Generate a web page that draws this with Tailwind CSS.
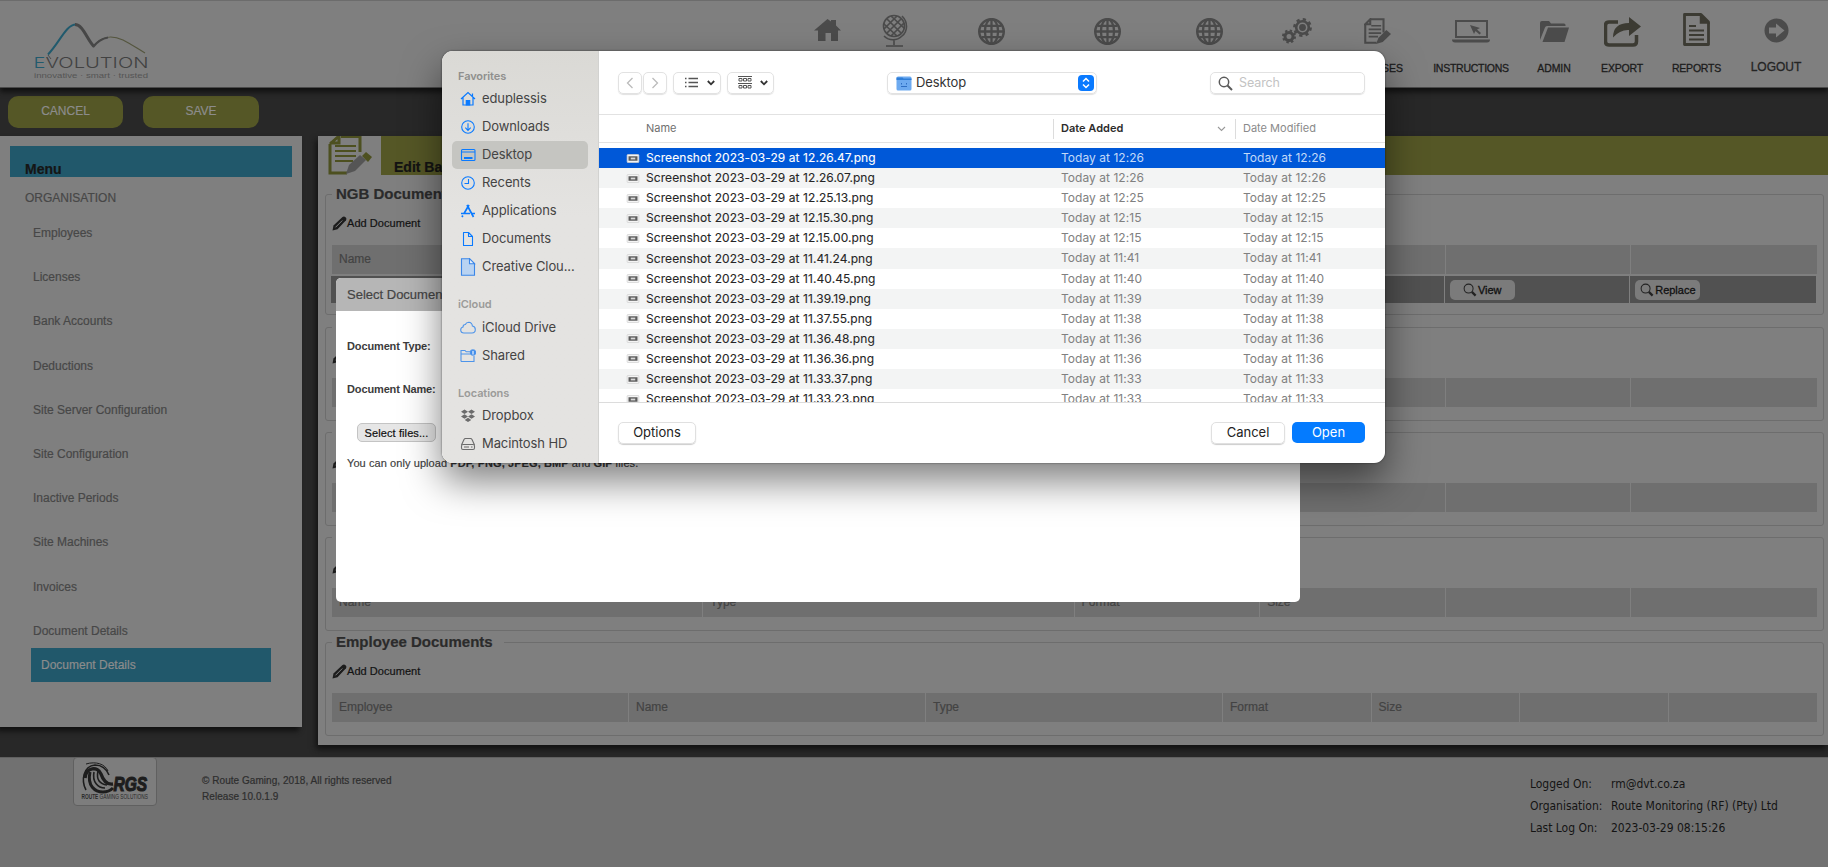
<!DOCTYPE html>
<html lang="en">
<head>
  <meta charset="UTF-8" />
  <meta name="viewport" content="width=device-width, initial-scale=1.0"/>
  <title>Evolution - Document Details</title>
  <script src="https://cdn.jsdelivr.net/npm/@tailwindcss/browser@4"></script>
</head>
<body class="bg-[#282828] font-['Liberation_Sans',Arial,sans-serif]">
  <!-- Shared icons -->
  <svg class="hidden">
    <symbol id="globe" viewBox="0 0 26 26">
      <circle cx="13" cy="13" r="11.800" fill="none" stroke="currentColor" stroke-width="2.400"/>
      <ellipse cx="13" cy="13" rx="6.300" ry="12" fill="none" stroke="currentColor" stroke-width="2.200"/>
      <path d="M13 1v24M1 13h24M3.500 7.500h19M3.500 18.500h19" fill="none" stroke="currentColor" stroke-width="2.200"/>
    </symbol>
    <symbol id="docpen" viewBox="0 0 26 26">
      <path d="M6 1.200H18.800V14M1.200 6V23.800H12M1.200 6L6 1.200V6z" fill="none" stroke="currentColor" stroke-width="2"/>
      <path d="M7 7.500h9.500M4.500 11h12M4.500 14.500h12M4.500 18h9" stroke="currentColor" stroke-width="1.600"/>
    </symbol>
    <symbol id="pencil" viewBox="0 0 15 15">
      <path d="M.5 14.500l1-5L10.500 1q1.500-1.200 3 .200t.500 3L5.500 13.300z" fill="currentColor"/>
      <path d="M3.500 11.300L10.300 4.500" stroke="#7f7f7f" stroke-width="1"/>
    </symbol>
    <symbol id="lens" viewBox="0 0 15 15">
      <circle cx="6" cy="6" r="4.800" fill="none" stroke="currentColor" stroke-width="1.100"/>
      <path d="M9.500 9.500l4 4" stroke="currentColor" stroke-width="2.400"/>
    </symbol>
    <symbol id="thumb" viewBox="0 0 14 10">
      <rect x=".5" y=".5" width="13" height="9" rx="1" fill="#f4f4f4" stroke="#cfcfcf" stroke-width=".8"/>
      <rect x="2" y="2.500" width="10" height="5" fill="#5c5c5c"/>
      <rect x="4.500" y="4" width="5" height="2" fill="#d8d8d8"/>
    </symbol>
  </svg>

  <div class="relative w-[1828px] h-[867px] overflow-hidden flex flex-col">
    <!-- Header -->
    <header class="relative z-10 h-[88px] shrink-0 bg-[#7f7f7f] border-t border-[#6c6c6c] border-b border-b-[#4a4a4a] flex justify-between shadow-[0_4px_5px_#111]">
      <svg class="ml-[30px] mt-[18px]" width="126" height="64" viewBox="30 19 126 64" fill="none">
        <path d="M48 54.500C60 42 66 24.500 76 24.500" stroke="#215a6d" stroke-width="2"/>
        <path d="M75 24.500c8 0 12 15 19 22" stroke="#474747" stroke-width="3"/>
        <path d="M93 47c9-12 19-12 30-7c8 4 15 9 22 13" stroke="#55563f" stroke-width="1.200"/>
        <path d="M93 47c4-5 9-8.500 15-9.500" stroke="#474747" stroke-width="2.200"/>
        <path d="M48 55l3 4" stroke="#4a4a4a"/>
        <text x="33.500" y="67.800" font-size="15" font-family="Inter" font-weight="300" textLength="115" lengthAdjust="spacingAndGlyphs" fill="#424242"><tspan fill="#215a6d">E</tspan>VOLUTION</text>
        <text x="34" y="78" font-size="7.500" textLength="114" lengthAdjust="spacingAndGlyphs" fill="#555">innovative · smart · trusted</text>
      </svg>
      <nav class="flex mr-[7px] text-[#4b4b4b] text-[10.5px] [-webkit-text-stroke:.3px]">
        <a class="w-[68px] flex justify-center pt-[18px]"><svg width="27" height="22" viewBox="0 0 27 22" fill="currentColor"><path d="M13.500 0L17 2.500V1h5v5.500l5 5h-3V22h-7v-8h-5.500v8H4V11.500H0z"/></svg></a>
        <a class="w-[68px] flex justify-center pt-[13px]">
          <svg width="26" height="34" viewBox="0 0 26 34" fill="none" stroke="currentColor" stroke-width="1.600">
            <circle cx="12" cy="12" r="10.500"/><path d="M20 2c6 6 6 15 0 20-5 5-13 5-18 0M12 26v5M4 32h17" />
            <path d="M5 5l14 14M2 10l13 12M9 2l13 12M19 5L5 19M15 2L2 15M22 9L9 22" stroke-width="1.700"/>
          </svg>
        </a>
        <a class="w-[124px] flex justify-center pt-[17px]"><svg width="27" height="27"><use href="#globe"/></svg></a>
        <a class="w-[108px] flex justify-center pt-[17px]"><svg width="27" height="27"><use href="#globe"/></svg></a>
        <a class="w-[97px] flex justify-center pt-[17px]"><svg width="27" height="27"><use href="#globe"/></svg></a>
        <a class="w-[78px] flex justify-center pt-[17px]">
          <svg width="31" height="27" viewBox="0 0 31 27" fill="none" stroke="currentColor">
            <circle cx="20.500" cy="9.500" r="6.300" stroke-width="2.600"/><circle cx="20.500" cy="9.500" r="8.200" stroke-width="2.400" stroke-dasharray="3.220 3.220"/><circle cx="20.500" cy="9.500" r="3.400" fill="currentColor" stroke="none"/>
            <circle cx="7" cy="18.500" r="4" stroke-width="3"/><circle cx="7" cy="18.500" r="6" stroke-width="2" stroke-dasharray="2.356 2.356"/>
          </svg>
        </a>
        <a class="w-[82px] flex flex-col items-center pt-[17px]">
          <svg width="27" height="27" viewBox="0 0 26 26"><use href="#docpen"/><path d="M11.500 25l2.500-6 7.500-7.500 4.500 4-8 7.500z" fill="currentColor"/></svg>
          <span class="mt-[16px] leading-[14px] text-[#1c1c1c]">LICENSES</span>
        </a>
        <a class="w-[106px] flex flex-col items-center pt-[19px]">
          <svg width="38" height="23" viewBox="0 0 38 23" fill="currentColor"><path d="M3 0h33v18H3zM5 2v14h29V2z" fill-rule="evenodd"/><path d="M0 19.500h38q0 3-3 3H3q-3 0-3-3zM18 5l10 3-3 1.500 4 3.500-1.500 1.500-4-3.500-1.500 3z"/></svg>
          <span class="mt-[18px] leading-[14px] text-[#1c1c1c] tracking-[-.25px]">INSTRUCTIONS</span>
        </a>
        <a class="w-[60px] flex flex-col items-center pt-[20px]">
          <svg width="29" height="21" viewBox="0 0 29 21" fill="currentColor"><path d="M0 19V2q0-2 2-2h7l2 2.500h13q1.500 0 1.500 1.500v1H7Q5.500 5 5 6.500z"/><path d="M8 6.500h21L24.500 21H2.500z"/></svg>
          <span class="mt-[19px] leading-[14px] text-[#1c1c1c] tracking-[-.1px]">ADMIN</span>
        </a>
        <a class="w-[76px] flex flex-col items-center pt-[16px]">
          <svg width="37" height="30" viewBox="0 0 37 30" fill="#3c3b33"><path d="M14 5H5Q1.500 5 1.500 8.500v16Q1.500 28 5 28h24q3.500 0 3.500-3.500V18" fill="none" stroke="#3c3b33" stroke-width="3.500"/><path d="M9 20.500Q9 6 25 6V0l12 9.500L25 19v-6q-9-.5-16 7.500z"/></svg>
          <span class="mt-[14px] leading-[14px] text-[#1c1c1c] tracking-[-.2px]">EXPORT</span>
        </a>
        <a class="w-[73px] flex flex-col items-center pt-[12px]">
          <svg width="27" height="33" viewBox="0 0 27 33" fill="none" stroke="#3c3b33" stroke-width="2.800"><path d="M1.500 1.500H18L25.500 9v22.500h-24z" stroke-linejoin="round"/><path d="M17.500 1.500v8.500h8z" fill="#3c3b33" stroke-width="1.500"/><path d="M6 13h7M6 17.500h15M6 22h15M6 26.500h15" stroke-width="2.200"/></svg>
          <span class="mt-[15px] leading-[14px] text-[#1c1c1c] tracking-[-.2px]">REPORTS</span>
        </a>
        <a class="w-[86px] mr-[2px] flex flex-col items-center pt-[17px]">
          <svg width="25" height="25" viewBox="0 0 25 25"><circle cx="12.500" cy="12.500" r="12" fill="currentColor"/><path d="M5 9.500h7V5.500l8.500 7-8.500 7v-4H5z" fill="#7f7f7f"/></svg>
          <span class="mt-[16px] leading-[16px] text-[12px] text-[#242424]">LOGOUT</span>
        </a>
      </nav>
    </header>

    <!-- Action buttons -->
    <div class="flex gap-5 pl-2 pt-2 h-[47px] shrink-0 text-[12px] text-[#8c8c8c] leading-[30px] [-webkit-text-stroke:.2px]">
      <button class="w-[115px] h-8 pb-[2px] rounded-[10px] bg-[#555726]">CANCEL</button>
      <button class="w-[116px] h-8 pb-[2px] rounded-[10px] bg-[#555726]">SAVE</button>
    </div>

    <div class="flex items-start justify-between h-[622px] shrink-0 pt-px [-webkit-text-stroke:.2px]">
      <!-- Side menu -->
      <aside class="w-[302px] h-[591px] bg-[#7f7f7f] shadow-[-3px_4px_5px_#111] text-[12px] text-[#474747]">
        <div class="h-[10px]"></div>
        <div class="ml-[10px] w-[282px] h-[31px] bg-[#21586b] text-[#151515] font-bold text-[14px] leading-[46px] pl-[15px]">Menu</div>
        <div class="ml-[25px] mt-[13px] leading-[16px] mb-[7px]">ORGANISATION</div>
        <ul id="menu" class="pl-[33px]"></ul>
        <div class="ml-[31px] w-[240px] h-[34px] bg-[#21586b] text-[#8c8c8c] leading-[34px] pl-[10px]">Document Details</div>
      </aside>

      <!-- Content -->
      <main class="w-[1510px] h-[609px] bg-[#7f7f7f] shadow-[-2px_4px_6px_#111]">
        <div class="flex h-[40px]">
          <svg class="ml-[10px]" width="45" height="39" viewBox="0 1 45 39" fill="none">
            <path d="M13 1.500H32V17M2 9V38H19M2 9L11 1V8H2" stroke="#4d5020" stroke-width="3"/>
            <path d="M7 11h21M7 16h21M7 21h21M7 26h18" stroke="#4d5020" stroke-width="2.200"/>
            <path d="M18 39l3-9 11-10 6 5-11 11z" fill="#555"/><path d="M34 21l4-4 6 5-4 5z" fill="#4d5020"/>
          </svg>
          <div class="ml-[8px] flex-1 bg-[#555726] text-[#131313] font-bold text-[14px] leading-[63px] pl-[13px] h-[39px]">Edit Bank Account</div>
        </div>
        <div id="sections" class="pl-[7px] pr-[4px] pt-[8px]"></div>
      </main>
    </div>

    <!-- Footer -->
    <footer class="flex-1 bg-[#717171] border-t border-[#606060] flex">
      <div class="ml-[73px] -mt-px w-[84px] h-[49px] bg-[#7d7d7d] border border-[#606060] rounded-[4px] shrink-0">
        <svg width="82" height="47" viewBox="74 757 82 47" fill="none" stroke="#1d1d1d">
          <path d="M86 789c-5-9-3-24 9-25 8 0 12 5 14 10" stroke-width="1.600"/>
          <path d="M86 763c10-3 19 0 22 7" stroke-width="1"/>
          <path d="M85 777c1-11 13-12 16-4 2 6 5 11 12 10" stroke-width="3.400"/>
          <path d="M90 771c-3 14 5 20 13 20 5 0 8-2 10-4" stroke-width="3"/>
          <path d="M94 771c-2 10 4 16 11 16M98 770c-2 9 2 13 9 14" stroke-width="1.600"/>
          <text x="113.500" y="789.800" font-size="20" font-weight="bold" font-style="italic" textLength="33.500" lengthAdjust="spacingAndGlyphs" fill="#1d1d1d" stroke="#1d1d1d" stroke-width="1.200">RGS</text>
          <text x="81.500" y="798" font-size="6.300" textLength="66.500" lengthAdjust="spacingAndGlyphs" fill="#2a2a2a" stroke="none"><tspan font-weight="bold">ROUTE</tspan> GAMING SOLUTIONS</text>
        </svg>
      </div>
      <div class="ml-[45px] mt-[15px] text-[10px] leading-[16px] text-[#2e2e2e] tracking-[.05px] [-webkit-text-stroke:.2px]">
        <p>© Route Gaming, 2018, All rights reserved</p>
        <p>Release 10.0.1.9</p>
      </div>
      <div class="ml-auto mr-[46px] mt-[15px] w-[252px] grid grid-cols-[81px_1fr] content-start text-[12px] leading-[22px] text-[#141414] font-['DejaVu_Sans_Condensed','DejaVu_Sans',sans-serif] tracking-[-.02px] whitespace-nowrap">
        <span>Logged On:</span><span>rm@dvt.co.za</span>
        <span>Organisation:</span><span>Route Monitoring (RF) (Pty) Ltd</span>
        <span>Last Log On:</span><span>2023-03-29 08:15:26</span>
      </div>
    </footer>

    <!-- Upload modal -->
    <div class="absolute z-20 left-[336px] top-[278px] w-[964px] h-[324px] bg-white rounded-[5px] overflow-hidden text-[11px] text-[#3c3c3c]">
      <div class="h-[33px] bg-[#b6b6b6] leading-[34px] pl-[11px] text-[13px] text-[#444] [-webkit-text-stroke:.2px]">Select Document</div>
      <div class="pl-[11px] pt-[27px] leading-[16px]">
        <p class="font-bold tracking-[-.13px]">Document Type:</p>
        <p class="font-bold tracking-[-.13px] mt-[27px]">Document Name:</p>
        <button class="block ml-[10px] mt-[26px] w-[79px] h-[19px] rounded-[5px] border border-[#c4c4c4] bg-[#e6e6e6] text-[#111] leading-[16px] tracking-[.1px] [-webkit-text-stroke:.2px]">Select files...</button>
        <p class="mt-[13px] tracking-[.08px] [-webkit-text-stroke:.15px]">You can only upload <b>PDF, PNG, JPEG, BMP</b> and <b>GIF</b> files.</p>
      </div>
    </div>

    <!-- File picker -->
    <div class="absolute z-30 left-[442px] top-[51px] w-[943px] h-[412px] rounded-[11px] shadow-[0_18px_38px_rgba(0,0,0,.5),0_0_2px_rgba(0,0,0,.6)] font-['Inter',sans-serif]">
      <div class="flex size-full rounded-[11px] overflow-hidden bg-white">
        <div class="w-[157px] shrink-0 border-r border-[#d2d2d0] bg-linear-to-b from-[#dad9d5] to-[#e4e3e1] to-40% text-[13px] tracking-[-.1px] text-[#444] pt-[16px]">
          <div class="pl-4 h-[18px] leading-[18px] text-[11px] font-semibold text-[#8f8f8d]">Favorites</div>
          <div class="flex items-center h-[28px] pl-[18px] gap-[6px]">
            <svg width="16" height="16" viewBox="0 0 16 16" fill="none" stroke="#0a7aff" stroke-width="1.200"><path d="M1 8l7-6.500L15 8M3 6.500V14h10V6.500M12.500 5V2.500"/><path d="M6.300 14V9.500h3.400V14z" fill="#0a7aff"/></svg>
            <span>eduplessis</span>
          </div>
          <div class="flex items-center h-[28px] pl-[18px] gap-[6px]">
            <svg width="16" height="16" viewBox="0 0 16 16" fill="none" stroke="#0a7aff" stroke-width="1.100"><circle cx="8" cy="8" r="6.300"/><path d="M8 4.300v7M5.300 8.700L8 11.400l2.700-2.700"/></svg>
            <span>Downloads</span>
          </div>
          <div class="flex items-center h-[28px] ml-[10px] w-[136px] rounded-[5px] bg-[#c5c5c1] pl-[8px] gap-[6px]">
            <svg width="16" height="16" viewBox="0 0 16 16" fill="none" stroke="#0a7aff" stroke-width="1.100"><rect x="1.500" y="2.500" width="13.500" height="11" rx="1"/><path d="M1.500 5h13.500"/><path d="M4 11h8.500" stroke-width="2"/></svg>
            <span>Desktop</span>
          </div>
          <div class="flex items-center h-[28px] pl-[18px] gap-[6px]">
            <svg width="16" height="16" viewBox="0 0 16 16" fill="none" stroke="#0a7aff" stroke-width="1.100"><circle cx="8" cy="8" r="6.300"/><path d="M8.500 4v4.500H4.500"/></svg>
            <span>Recents</span>
          </div>
          <div class="flex items-center h-[28px] pl-[18px] gap-[6px]">
            <svg width="16" height="16" viewBox="0 0 16 16" fill="none" stroke="#0a7aff" stroke-width="1.700"><path d="M9 2L4 10.500M7 2l6.500 12M1 10.500h9M12 10.500h3M2.800 12.500L2 14"/></svg>
            <span>Applications</span>
          </div>
          <div class="flex items-center h-[28px] pl-[18px] gap-[6px]">
            <svg width="16" height="16" viewBox="0 0 16 16" fill="none" stroke="#0a7aff" stroke-width="1.100"><path d="M3.500 1.500h5l4 4v9h-9zM8.500 1.500v4h4" stroke-linejoin="round"/></svg>
            <span>Documents</span>
          </div>
          <div class="flex items-center h-[28px] pl-[18px] gap-[6px]">
            <svg width="16" height="18" viewBox="0 0 16 18" fill="#b9d3f2" stroke="#3b86e8" stroke-width="1.100"><path d="M1.500 .7h8l5 5v11.600h-13z"/><path d="M9.500 .7v5h5z" fill="#e8f1fb"/></svg>
            <span>Creative Clou...</span>
          </div>
          <div class="pl-4 mt-[15px] h-[18px] leading-[17px] text-[11px] font-semibold text-[#9b9b99]">iCloud</div>
          <div class="flex items-center h-[28px] pl-[18px] gap-[6px]">
            <svg width="16" height="14" viewBox="0 0 16 14" fill="none" stroke="#4d94ea" stroke-width="1.100"><path d="M4 12q-3.200 0-3.300-3Q.7 6.500 3 6q0-2.500 2.300-2.500Q6.300 1.300 8.800 1.300q3.200.2 3.600 3.700 3 .5 2.900 3.700Q15.200 12 12 12z"/></svg>
            <span>iCloud Drive</span>
          </div>
          <div class="flex items-center h-[28px] pl-[18px] gap-[6px]">
            <svg width="16" height="14" viewBox="0 0 16 14" fill="none" stroke="#4d94ea" stroke-width="1.100"><path d="M1 12.500V1.500h4l1.200 1.300h4M1 5h9.500M14 7v5.500H1"/><circle cx="13" cy="3.500" r="2.600" fill="#3f8beb"/><path d="M13 2v3.500" stroke="#fff"/></svg>
            <span>Shared</span>
          </div>
          <div class="pl-4 mt-[15px] h-[17px] leading-[17px] text-[11px] font-semibold text-[#9b9b99]">Locations</div>
          <div class="flex items-center h-[28px] pl-[18px] gap-[6px]">
            <svg width="16" height="14" viewBox="0 0 16 14" fill="#6c6c6c"><path d="M4.500 .5L8 2.700 4.500 5 1 2.700zM11.500 .5L15 2.700 11.500 5 8 2.700zM4.500 5.300L8 7.500 4.500 9.800 1 7.500zM11.500 5.300L15 7.500l-3.500 2.300L8 7.500zM8 8.800l3.300 2.200L8 13l-3.300-2z"/></svg>
            <span>Dropbox</span>
          </div>
          <div class="flex items-center h-[28px] pl-[18px] gap-[6px]">
            <svg width="16" height="14" viewBox="0 0 16 14" fill="none" stroke="#6c6c6c" stroke-width="1.100"><path d="M1.500 8L4 2.500Q4.500 1.500 5.500 1.500h5q1 0 1.500 1L14.500 8"/><rect x="1.500" y="7.500" width="13" height="5" rx="1.500"/><path d="M4 10h5M11 10h1.500"/></svg>
            <span>Macintosh HD</span>
          </div>
        </div>

        <div class="flex-1 min-w-0 flex flex-col">
          <!-- Toolbar -->
          <div class="h-[63px] shrink-0 pt-[21px] pl-[19px] pr-[20px] flex text-[13px] tracking-[-.1px] text-[#333]">
            <div class="flex gap-px">
              <span class="w-[24px] h-[22px] rounded-[5px] border border-[#e2e2e2] shadow-[0_1px_1px_rgba(0,0,0,.12)] flex items-center justify-center"><svg width="8" height="12" fill="none" stroke="#bbb" stroke-width="1.300"><path d="M6.500 1L1.500 6l5 5"/></svg></span>
              <span class="w-[24px] h-[22px] rounded-[5px] border border-[#e2e2e2] shadow-[0_1px_1px_rgba(0,0,0,.12)] flex items-center justify-center"><svg width="8" height="12" fill="none" stroke="#bbb" stroke-width="1.300"><path d="M1.500 1l5 5-5 5"/></svg></span>
            </div>
            <span class="ml-[6px] w-[48px] h-[22px] rounded-[5px] border border-[#e2e2e2] shadow-[0_1px_1px_rgba(0,0,0,.12)] flex items-center pl-[11px] gap-[9px]">
              <svg width="13" height="12" stroke="#555" stroke-width="1.300"><path d="M0 1.500h1.500M3.500 1.500H13M0 5.500h1.500M3.500 5.500H13M0 9.500h1.500M3.500 9.500H13"/></svg>
              <svg width="8" height="6" fill="none" stroke="#333" stroke-width="1.800"><path d="M.8 1L4 4.300 7.200 1"/></svg>
            </span>
            <span class="ml-[6px] w-[47px] h-[22px] rounded-[5px] border border-[#e2e2e2] shadow-[0_1px_1px_rgba(0,0,0,.12)] flex items-center pl-[10px] gap-[8px]">
              <svg width="14" height="14" fill="none" stroke="#555"><path d="M0 .5h14M0 7.500h14"/><path d="M1 2.500h3v2.500H1zM5.500 2.500h3v2.500h-3zM10 2.500h3v2.500h-3zM1 9.500h3V12H1zM5.500 9.500h3V12h-3zM10 9.500h3V12h-3z"/></svg>
              <svg width="8" height="6" fill="none" stroke="#333" stroke-width="1.800"><path d="M.8 1L4 4.300 7.200 1"/></svg>
            </span>
            <span class="ml-[113px] w-[210px] h-[22px] rounded-[5px] border border-[#e2e2e2] shadow-[0_1px_1px_rgba(0,0,0,.12)] flex items-center pl-[8px] pr-[2px]">
              <svg width="16" height="15" viewBox="0 0 16 15"><rect x=".5" y=".5" width="15" height="14" rx="1.500" fill="#6daaf0"/><path d="M.5 1.500h6l1 1h8V4H.5z" fill="#2f7ed8"/><path d="M5.500 7v1.500M10.500 7v1.500M5 10.500h6" stroke="#2f6fc4" fill="none"/></svg>
              <span class="ml-[4px]">Desktop</span>
              <span class="ml-auto size-[16px] rounded-[4px] bg-[#0a7aff] flex items-center justify-center"><svg width="8" height="12" fill="none" stroke="#fff" stroke-width="1.500"><path d="M1 4.500L4 1.500l3 3M1 7.500l3 3 3-3"/></svg></span>
            </span>
            <span class="ml-auto w-[155px] h-[22px] rounded-[5px] border border-[#e2e2e2] shadow-[0_1px_1px_rgba(0,0,0,.12)] flex items-center pl-[7px] gap-[6px] text-[12.5px] text-[#c3c3c3]">
              <svg width="15" height="15" fill="none" stroke="#5a5a5a" stroke-width="1.500"><circle cx="6" cy="6" r="4.700"/><path d="M9.500 9.500l4.500 4.500" stroke-width="1.900"/></svg>
              <span>Search</span>
            </span>
          </div>
          <!-- Column headers -->
          <div class="h-[29px] shrink-0 border-y border-[#e2e2e2] grid grid-cols-[454px_182px_1fr] items-center text-[11px] text-[#6f6f6f]">
            <span class="pl-[47px] pb-px">Name</span>
            <span class="h-[20px] border-l border-[#dcdcdc] pl-[7px] pr-[9px] flex items-center justify-between font-semibold text-[#2c2c2c]"><span class="pb-px">Date Added</span><svg width="9" height="6" fill="none" stroke="#999" stroke-width="1.100"><path d="M1 1l3.500 3.500L8 1"/></svg></span>
            <span class="h-[20px] border-l border-[#dcdcdc] pl-[7px] leading-[18px] text-[#8a8a8a]">Date Modified</span>
          </div>
          <div id="files" class="h-[260px] shrink-0 overflow-hidden pt-[5px] border-b border-[#dcdcdc] text-[12px] tracking-[.04px]"></div>
          <!-- Buttons -->
          <div class="flex items-start pt-[19px] pl-[19px] pr-[20px] text-[13px] text-[#222]">
            <button class="w-[78px] h-[22px] rounded-[5px] border border-[#e0e0e0] shadow-[0_1px_1px_rgba(0,0,0,.2)]">Options</button>
            <button class="ml-auto w-[74px] h-[22px] rounded-[5px] border border-[#e0e0e0] shadow-[0_1px_1px_rgba(0,0,0,.2)]">Cancel</button>
            <button class="ml-[7px] w-[73px] h-[21px] rounded-[5px] bg-[#047bff] text-white">Open</button>
          </div>
        </div>
      </div>
    </div>
  </div>

  <script>
    const menu = ["Employees", "Licenses", "Bank Accounts", "Deductions", "Site Server Configuration", "Site Configuration", "Inactive Periods", "Site Machines", "Invoices", "Document Details"];
    document.getElementById("menu").innerHTML = menu.map((name, i) =>
      `<li class="leading-[16px] pt-[12px] ${i < menu.length - 1 ? "h-[44.2px]" : "h-[37px]"}">${name}</li>`
    ).join("");

    const docCols = ["Name", "Type", "Format", "Size", "", ""];
    const sections = [
      { title: "NGB Documents", size: "h-[131px] mb-[2px]", grid: "grid-cols-[2fr_2fr_1fr_1fr_1fr_1fr]", cols: docCols, row: true },
      { title: "", size: "h-[104px] mb-px", grid: "grid-cols-[2fr_2fr_1fr_1fr_1fr_1fr]", cols: docCols },
      { title: "", size: "h-[104px] mb-px", grid: "grid-cols-[2fr_2fr_1fr_1fr_1fr_1fr]", cols: docCols },
      { title: "", size: "h-[104px] mb-px", grid: "grid-cols-[2fr_2fr_1fr_1fr_1fr_1fr]", cols: docCols },
      { title: "Employee Documents", size: "h-[104px]", grid: "grid-cols-[2fr_2fr_2fr_1fr_1fr_1fr_1fr]", cols: ["Employee", "Name", "Type", "Format", "Size", "", ""] }
    ];
    const action = (label) =>
      `<button class="w-[65px] h-[20px] mt-[4px] ml-[5px] rounded-[5px] bg-[#7b7b7b] text-[#111] text-[11px] [-webkit-text-stroke:.3px] flex items-center justify-center gap-[1px]"><svg width="14" height="14" class="text-[#222]"><use href="#lens"/></svg>${label}</button>`;
    document.getElementById("sections").innerHTML = sections.map((s) => `
      <fieldset class="${s.size} border border-[#6d6d6d] rounded-[3px] pl-[6px] pr-[6px]">
        <legend class="h-[20px] leading-[20px] pl-[4px] pr-[11px] font-bold text-[15px] text-[#2b2b2b]">${s.title}</legend>
        <div class="flex items-center h-[18px] mt-[10px] mb-[13px] text-[11px] tracking-[.05px] text-[#121212]"><svg width="15" height="15" class="text-[#1c1c1c]"><use href="#pencil"/></svg>Add Document</div>
        <div class="grid ${s.grid} h-[29px] bg-[#6f6f6f] text-[12px] leading-[29px] text-[#434343]">
          ${s.cols.map((c, i) => `<span class="pl-[7px] ${i < s.cols.length - 1 ? "border-r border-[#7f7f7f]" : ""}">${c}</span>`).join("")}
        </div>
        ${s.row ? `<div class="grid ${s.grid} h-[27px] mt-[2px] -ml-px mr-px bg-[#515151]">
          ${["", "", "", "", action("View"), action("Replace")].map((c, i) => `<span class="${i < 5 ? "border-r border-[#7f7f7f]" : ""}">${c}</span>`).join("")}
        </div>` : ""}
      </fieldset>`).join("");

    const files = [
      ["12.26.47", "12:26"], ["12.26.07", "12:26"], ["12.25.13", "12:25"], ["12.15.30", "12:15"], ["12.15.00", "12:15"],
      ["11.41.24", "11:41"], ["11.40.45", "11:40"], ["11.39.19", "11:39"], ["11.37.55", "11:38"], ["11.36.48", "11:36"],
      ["11.36.36", "11:36"], ["11.33.37", "11:33"], ["11.33.23", "11:33"]
    ];
    document.getElementById("files").innerHTML = files.map(([stamp, time], i) => `
      <div class="h-[20.1px] leading-[20px] grid grid-cols-[462px_182px_1fr] whitespace-nowrap ${i === 0 ? "bg-[#0058d8] text-[#c3daf8]" : i % 2 ? "bg-[#f3f4f4] text-[#808080]" : "text-[#808080]"}">
        <span class="flex items-center pl-[27px] gap-[6px] tracking-[.07px] ${i === 0 ? "text-white" : "text-[#262626]"} [-webkit-text-stroke:.1px]"><svg width="14" height="9"><use href="#thumb"/></svg>Screenshot 2023-03-29 at ${stamp}.png</span>
        <span>Today at ${time}</span>
        <span>Today at ${time}</span>
      </div>`).join("");
  </script>
</body>
</html>
